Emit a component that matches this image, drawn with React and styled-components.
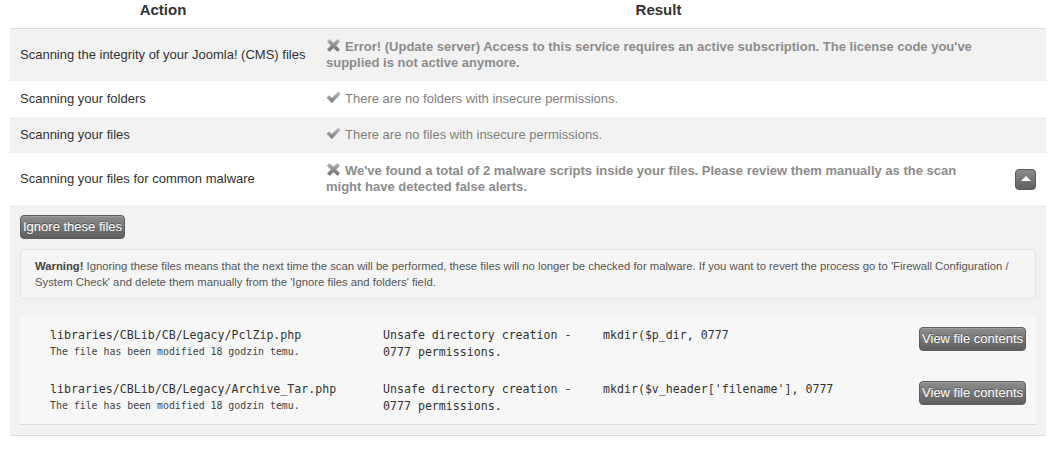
import React from "react";
import styled, { createGlobalStyle } from "styled-components";

const Global = createGlobalStyle`
  html, body { margin: 0; padding: 0; background: #ffffff; }
  body { font-family: "Liberation Sans", Arial, sans-serif; font-size: 13px; color: #333; }
`;

const Page = styled.div`
  padding: 0 14px 0 10px;
`;

const Table = styled.table`
  width: 1036px;
  border-collapse: collapse;
  table-layout: fixed;
`;

const HeadCell = styled.th`
  font-size: 15px;
  font-weight: bold;
  color: #333;
  line-height: 16px;
  padding: 2px 0 10px;
  text-align: center;
  border-bottom: 1px solid #dcdcdc;
`;

const Row = styled.tr`
  background: ${(p) => (p.$shade ? "#f2f2f2" : "#ffffff")};
`;

const Cell = styled.td`
  padding: 10px 10px;
  line-height: 16px;
  vertical-align: middle;
  color: #333;
  font-size: 13px;
`;

const ToggleCell = styled.td`
  padding: 0 10px 0 0;
  text-align: right;
  vertical-align: middle;
`;

const Result = styled.span`
  color: ${(p) => (p.$bold ? "#8c8c8c" : "#808080")};
  font-weight: ${(p) => (p.$bold ? "bold" : "normal")};
  font-size: 13px;
`;

const IconWrap = styled.span`
  display: inline-block;
  width: 15px;
  height: 13px;
  margin-right: 4px;
  vertical-align: -1px;
`;

const ToggleButton = styled.button`
  width: 21px;
  height: 21px;
  border-radius: 4px;
  border: 1px solid #5a5a5a;
  background: linear-gradient(#8c8c8c, #606060);
  padding: 0;
  display: inline-flex;
  align-items: center;
  justify-content: center;
  cursor: pointer;
`;

const Triangle = styled.span`
  width: 0;
  height: 0;
  border-left: 5px solid transparent;
  border-right: 5px solid transparent;
  border-bottom: 5px solid #ffffff;
  margin-top: -1px;
`;

const DetailRow = styled.tr`
  background: #f2f2f2;
  border-bottom: 1px solid #dcdcdc;
`;

const DetailCell = styled.td`
  padding: 10px 10px 10px;
`;

const GrayButton = styled.button`
  font-family: "Liberation Sans", Arial, sans-serif;
  font-size: 13px;
  color: #ffffff;
  line-height: 16px;
  padding: 3px 2px 3px;
  border: 1px solid #5e5e5e;
  border-radius: 4px;
  background: linear-gradient(#8e8e8e, #5e5e5e);
  text-shadow: 0 -1px 0 rgba(0, 0, 0, 0.35);
  cursor: pointer;
  white-space: nowrap;
  box-shadow: inset 0 1px 0 rgba(255, 255, 255, 0.15);
`;

const Warning = styled.div`
  margin-top: 10px;
  padding: 8px 14px;
  background: #f5f5f5;
  border: 1px solid #e4e4e4;
  border-radius: 2px;
  font-size: 11.3px;
  line-height: 16px;
  color: #555;
`;

const Strong = styled.b`
  color: #444;
  margin-right: 3px;
`;

const Files = styled.div`
  margin-top: 17px;
  background: #f7f7f7;
  border-bottom: 1px solid #dcdcdc;
`;

const FileRow = styled.div`
  display: grid;
  grid-template-columns: 333px 220px 1fr auto;
  align-items: start;
  padding: 10px 10px 9px 30px;
  height: 54px;
  box-sizing: border-box;
  font-family: "DejaVu Sans Mono", "Liberation Mono", monospace;
  font-size: 11.6px;
  color: #333;
`;

const Path = styled.div`
  line-height: 18px;
`;

const Sub = styled.div`
  font-size: 9.9px;
  line-height: 16px;
  color: #444;
`;

const Mono = styled.div`
  line-height: 17px;
  padding-top: 1px;
`;

const ViewButton = styled(GrayButton)`
  margin-top: 1px;
`;

const XIcon = () => (
  <IconWrap>
    <svg width="15" height="13" viewBox="0 0 15 13">
      <defs>
        <linearGradient id="xg" x1="0" y1="0" x2="0" y2="1">
          <stop offset="0" stopColor="#b0b0b0" />
          <stop offset="1" stopColor="#6c6c6c" />
        </linearGradient>
      </defs>
      <path
        d="M1 2.6 L3.6 0.2 L7.5 3.7 L11.4 0.2 L14 2.6 L10.3 6.5 L14 10.4 L11.4 12.8 L7.5 9.3 L3.6 12.8 L1 10.4 L4.7 6.5 Z"
        fill="url(#xg)"
        stroke="#cfcfcf"
        strokeWidth="0.5"
        strokeLinejoin="round"
      />
    </svg>
  </IconWrap>
);

const CheckIcon = () => (
  <IconWrap>
    <svg width="15" height="13" viewBox="0 0 15 13">
      <defs>
        <linearGradient id="cg" x1="0" y1="0" x2="0" y2="1">
          <stop offset="0" stopColor="#bdbdbd" />
          <stop offset="1" stopColor="#757575" />
        </linearGradient>
      </defs>
      <path
        d="M0.5 6.8 L3 4.2 L5.8 6.9 L12.1 0.6 L14.6 3.1 L5.8 12.2 Z"
        fill="url(#cg)"
        stroke="#dcdcdc"
        strokeWidth="0.5"
        strokeLinejoin="round"
      />
    </svg>
  </IconWrap>
);

const files = [
  {
    path: "libraries/CBLib/CB/Legacy/PclZip.php",
    code: "mkdir($p_dir, 0777",
  },
  {
    path: "libraries/CBLib/CB/Legacy/Archive_Tar.php",
    code: "mkdir($v_header['filename'], 0777",
  },
];

export default function App() {
  return (
    <Page>
      <Global />
      <Table>
        <colgroup>
          <col style={{ width: "306px" }} />
          <col style={{ width: "685px" }} />
          <col style={{ width: "45px" }} />
        </colgroup>
        <thead>
          <tr>
            <HeadCell>Action</HeadCell>
            <HeadCell>Result</HeadCell>
            <HeadCell />
          </tr>
        </thead>
        <tbody>
          <Row $shade>
            <Cell>Scanning the integrity of your Joomla! (CMS) files</Cell>
            <Cell>
              <XIcon />
              <Result $bold>
                Error! (Update server) Access to this service requires an active
                subscription. The license code you've supplied is not active
                anymore.
              </Result>
            </Cell>
            <ToggleCell />
          </Row>
          <Row>
            <Cell>Scanning your folders</Cell>
            <Cell>
              <CheckIcon />
              <Result>There are no folders with insecure permissions.</Result>
            </Cell>
            <ToggleCell />
          </Row>
          <Row $shade>
            <Cell>Scanning your files</Cell>
            <Cell>
              <CheckIcon />
              <Result>There are no files with insecure permissions.</Result>
            </Cell>
            <ToggleCell />
          </Row>
          <Row>
            <Cell>Scanning your files for common malware</Cell>
            <Cell>
              <XIcon />
              <Result $bold>
                We've found a total of 2 malware scripts inside your files.
                Please review them manually as the scan might have detected false
                alerts.
              </Result>
            </Cell>
            <ToggleCell>
              <ToggleButton aria-label="collapse">
                <Triangle />
              </ToggleButton>
            </ToggleCell>
          </Row>
          <DetailRow>
            <DetailCell colSpan={3}>
              <GrayButton>Ignore these files</GrayButton>
              <Warning>
                <Strong>Warning!</Strong>Ignoring these files means that the next
                time the scan will be performed, these files will no longer be
                checked for malware. If you want to revert the process go to
                'Firewall Configuration / System Check' and delete them manually
                from the 'Ignore files and folders' field.
              </Warning>
              <Files>
                {files.map((f) => (
                  <FileRow key={f.path}>
                    <div>
                      <Path>{f.path}</Path>
                      <Sub>The file has been modified 18 godzin temu.</Sub>
                    </div>
                    <Mono>
                      Unsafe directory creation -
                      <br />
                      0777 permissions.
                    </Mono>
                    <Mono>{f.code}</Mono>
                    <ViewButton>View file contents</ViewButton>
                  </FileRow>
                ))}
              </Files>
            </DetailCell>
          </DetailRow>
        </tbody>
      </Table>
    </Page>
  );
}
